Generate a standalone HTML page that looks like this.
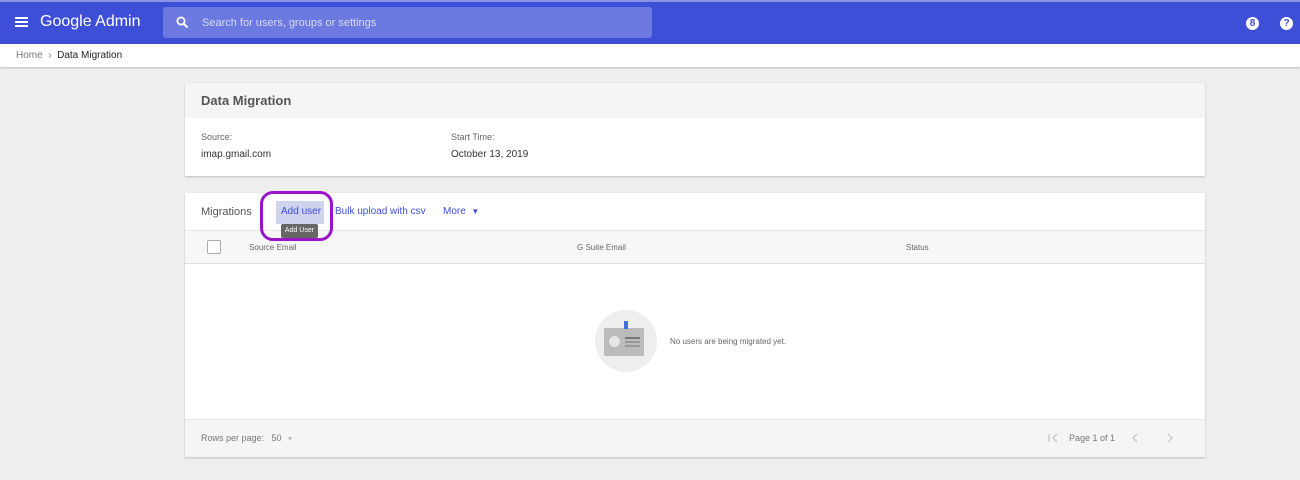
<!DOCTYPE html>
<html><head><style>
*{margin:0;padding:0;box-sizing:border-box}
body{width:1300px;height:480px;background:#eeeeee;font-family:"Liberation Sans",Arial,sans-serif;position:relative;overflow:hidden}
.a{position:absolute}
.top{left:0;top:0;width:1300px;height:44px;background:#3e4fd7;border-top:2px solid #8a93e6}
.bc{left:0;top:44px;width:1300px;height:23px;background:#fff;box-shadow:0 1px 2px rgba(0,0,0,.2);font-size:10px;color:#777}
.card{background:#fff;box-shadow:0 1px 2px rgba(0,0,0,.2)}
.t{font-size:10px;color:#333}
</style></head><body>
<div class="a top">
  <div class="a" style="left:15px;top:15px;width:13px;height:2px;background:#fff;box-shadow:0 4px 0 #fff,0 8px 0 #fff"></div>
  <div class="a" style="left:40px;top:11px;font-size:16px;color:#fff">Google Admin</div>
  <div class="a" style="left:163px;top:5px;width:489px;height:31px;background:#6c79e1;border-radius:3px">
    <svg class="a" style="left:13px;top:9px" width="13" height="13" viewBox="0 0 13 13"><circle cx="5" cy="5" r="3.6" stroke="#fff" stroke-width="1.8" fill="none"/><path d="M7.5 7.5L11.5 11.5" stroke="#fff" stroke-width="2"/></svg>
    <div class="a" style="left:39px;top:10px;font-size:11px;color:#d8dcf7">Search for users, groups or settings</div>
  </div>
  <div class="a" style="left:1246px;top:15px;width:13px;height:13px;border-radius:50%;background:#fff;color:#3e4fd7;font-size:10px;font-weight:bold;text-align:center;line-height:13px">8</div>
  <div class="a" style="left:1280px;top:15px;width:13px;height:13px;border-radius:50%;background:#fff;color:#3e4fd7;font-size:10px;font-weight:bold;text-align:center;line-height:13px">?</div>
</div>
<div class="a bc"><span class="a" style="left:16px;top:6px">Home &nbsp;›&nbsp; <b style="color:#222;font-weight:normal">Data Migration</b></span></div>

<div class="a card" style="left:185px;top:83px;width:1020px;height:93px">
  <div class="a" style="left:0;top:0;width:1020px;height:35px;background:#f5f5f5"></div>
  <div class="a" style="left:16px;top:10px;font-size:13px;font-weight:bold;color:#555">Data Migration</div>
  <div class="a" style="left:16px;top:49px;font-size:9px;color:#666">Source:</div>
  <div class="a t" style="left:16px;top:66px">imap.gmail.com</div>
  <div class="a" style="left:266px;top:49px;font-size:9px;color:#666">Start Time:</div>
  <div class="a t" style="left:266px;top:66px">October 13, 2019</div>
</div>

<div class="a card" style="left:185px;top:193px;width:1020px;height:264px">
  <div class="a" style="left:16px;top:13px;font-size:11px;color:#555">Migrations</div>
  <div class="a" style="left:91px;top:8px;width:48px;height:23px;background:#cfd3ee"></div>
  <div class="a" style="left:96px;top:13px;font-size:10px;color:#3e4fd7">Add user</div>
  <div class="a" style="left:150px;top:13px;font-size:10px;color:#3e4fd7">Bulk upload with csv</div>
  <div class="a" style="left:258px;top:13px;font-size:10px;color:#3e4fd7">More &nbsp;<span style="font-size:8px">▼</span></div>
  <div class="a" style="left:0;top:37px;width:1020px;height:34px;background:#f7f7f7;border-top:1px solid #e8e8e8;border-bottom:1px solid #e0e0e0"></div>
  <div class="a" style="left:22px;top:47px;width:14px;height:14px;border:1.5px solid #aaa;border-radius:2px;background:#fff"></div>
  <div class="a" style="left:64px;top:50px;font-size:8px;color:#666">Source Email</div>
  <div class="a" style="left:392px;top:50px;font-size:8px;color:#666">G Suite Email</div>
  <div class="a" style="left:721px;top:50px;font-size:8px;color:#666">Status</div>
  <div class="a" style="left:410px;top:117px;width:62px;height:62px;border-radius:50%;background:#eee"></div>
  <div class="a" style="left:419px;top:135px;width:40px;height:28px;background:#bbb;border-radius:2px"></div>
  <div class="a" style="left:439px;top:128px;width:4px;height:8px;background:#4a6ed8"></div>
  <div class="a" style="left:424px;top:143px;width:11px;height:11px;border-radius:50%;background:#e6e6e6"></div>
  <div class="a" style="left:440px;top:144px;width:15px;height:2px;background:#777;box-shadow:0 4px 0 #999,0 8px 0 #999"></div>
  <div class="a" style="left:485px;top:144px;font-size:8px;color:#666">No users are being migrated yet.</div>
  <div class="a" style="left:0;top:226px;width:1020px;height:38px;background:#f5f5f5;border-top:1px solid #e6e6e6"></div>
  <div class="a" style="left:16px;top:240px;font-size:9px;color:#777">Rows per page: &nbsp;&nbsp;50 &nbsp;<span style="color:#bbb;font-size:7px">▼</span></div>
  <svg class="a" style="left:862px;top:239px" width="12" height="12" viewBox="0 0 12 12"><path d="M2 2V10M10 2L6 6L10 10" stroke="#ccc" stroke-width="1.5" fill="none"/></svg>
  <div class="a" style="left:884px;top:240px;font-size:9px;color:#777">Page 1 of 1</div>
  <svg class="a" style="left:944px;top:239px" width="12" height="12" viewBox="0 0 12 12"><path d="M8 2L4 6L8 10" stroke="#ccc" stroke-width="1.5" fill="none"/></svg>
  <svg class="a" style="left:979px;top:239px" width="12" height="12" viewBox="0 0 12 12"><path d="M4 2L8 6L4 10" stroke="#ccc" stroke-width="1.5" fill="none"/></svg>
</div>

<div class="a" style="left:260px;top:191px;width:73px;height:50px;border:3.5px solid #9a14c9;border-radius:13px"></div>
<div class="a" style="left:281px;top:224px;width:37px;height:14px;background:#666;color:#fff;font-size:7px;text-align:center;line-height:14px;border-radius:2px">Add User</div>
</body></html>
